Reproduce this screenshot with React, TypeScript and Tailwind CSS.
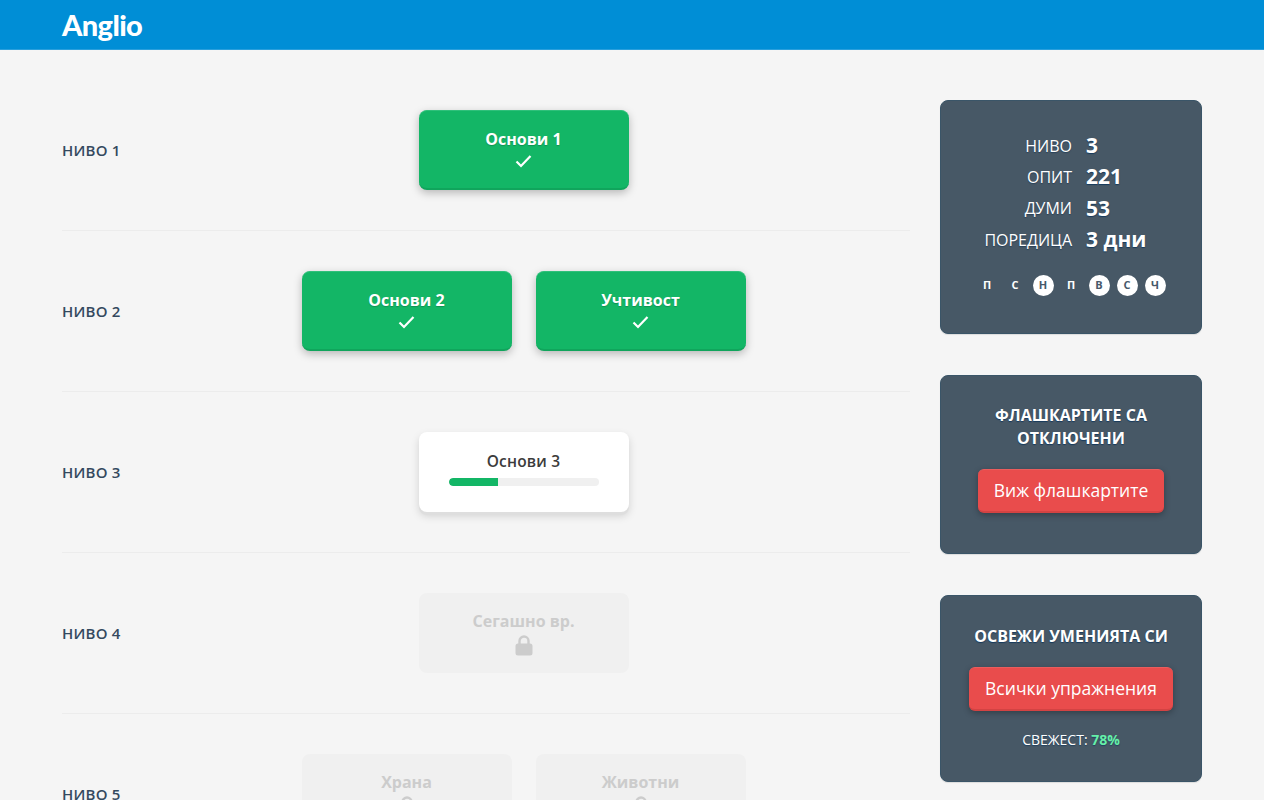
import React from "react";

function Check() {
  return (
    <svg width="17" height="14" viewBox="0 0 17 14" className="mt-[3px]" fill="none">
      <path d="M1.5 7.5 L6 12 L15.5 2" stroke="#fff" strokeWidth="2.2" />
    </svg>
  );
}

function Lock() {
  return (
    <svg width="18" height="21" viewBox="0 0 18 21" className="mt-[2px]">
      <path d="M4.5 9V6a4.5 4.5 0 0 1 9 0v3" fill="none" stroke="#cccccc" strokeWidth="2.4" />
      <rect x="0.5" y="8.5" width="17" height="12" rx="2.5" fill="#cccccc" />
    </svg>
  );
}

function Done({ title }: { title: string }) {
  return (
    <div className="w-[210px] h-[80px] rounded-lg bg-[#13b666] border-b-2 border-b-[#10a55c] border-t border-t-[#2fc07a] shadow-[0_3px_8px_rgba(0,0,0,0.25)] flex flex-col items-center pt-[16px]">
      <div className="text-white font-bold text-[16px] leading-[24px] [text-shadow:0_1px_1px_rgba(0,0,0,0.2)]">{title}</div>
      <Check />
    </div>
  );
}

function Locked({ title }: { title: string }) {
  return (
    <div className="w-[210px] h-[80px] rounded-lg bg-[#f0f0f0] flex flex-col items-center pt-[16px]">
      <div className="text-[#cccccc] font-bold text-[16px] leading-[24px]">{title}</div>
      <Lock />
    </div>
  );
}

function Current({ title }: { title: string }) {
  return (
    <div className="w-[210px] h-[80px] rounded-lg bg-white shadow-[0_3px_0_#dedede,0_4px_8px_rgba(0,0,0,0.15)] flex flex-col items-center pt-[17px]">
      <div className="text-[#3c3c3c] font-semibold text-[15.5px] leading-[24px] tracking-[0.2px]">{title}</div>
      <div className="w-[150px] h-[8px] rounded-full bg-[#f0f0f0] mt-[5px] overflow-hidden">
        <div className="w-[49px] h-full rounded-l-full bg-[#13b666]" />
      </div>
    </div>
  );
}

function Row({ level, children, last }: { level: number; children: React.ReactNode; last?: boolean }) {
  return (
    <div className={`flex items-center py-[40px] ${last ? "" : "border-b border-b-[#ececec]"}`}>
      <div className="w-[75px] text-[#34495e] font-semibold text-[15px] tracking-[0.2px]">НИВО {level}</div>
      <div className="flex-1 flex justify-center gap-[24px]">{children}</div>
    </div>
  );
}

function Stat({ label, value }: { label: string; value: string }) {
  return (
    <div className="flex items-center h-[31.3px]">
      <div className="w-[131px] text-right text-[16px] text-white [text-shadow:0_1px_1px_rgba(20,50,80,0.6)]">{label}</div>
      <div className="pl-[14px] text-[21px] font-bold text-white [text-shadow:0_1px_1px_rgba(10,50,90,0.8)]">{value}</div>
    </div>
  );
}

function Day({ d, on }: { d: string; on?: boolean }) {
  return (
    <div className={`w-[21px] h-[21px] rounded-full flex items-center justify-center text-[11px] font-bold ${on ? "bg-white text-[#47596a]" : "text-white"}`}>{d}</div>
  );
}

function Card({ className, children }: { className: string; children: React.ReactNode }) {
  return (
    <div className={`w-[262px] rounded-lg bg-[#475866] border border-[#3a5568] shadow-[0_1px_1px_rgba(0,0,0,0.1)] ${className}`}>{children}</div>
  );
}

function RedButton({ children }: { children: React.ReactNode }) {
  return (
    <div className="h-[44px] px-[16px] rounded-md bg-[#e94c4c] border-b-2 border-b-[#d34343] border-t border-t-[#ea5d5d] shadow-[0_2px_6px_rgba(0,0,0,0.3)] flex items-center justify-center text-white text-[17.5px]">{children}</div>
  );
}

export default function App() {
  return (
    <div className="h-[800px] overflow-hidden bg-[#f5f5f5] font-['Open_Sans',sans-serif]">
      <header className="h-[50px] bg-[#008ed6] border-b border-b-[#2a9fdc] pl-[62px] flex items-center">
        <span className="text-white font-black text-[29px] tracking-[-0.6px] font-['Lato',sans-serif]">Anglio</span>
      </header>
      <div className="flex pl-[62px] pt-[20px]">
        <div className="w-[848px] shrink-0">
          <Row level={1}><Done title="Основи 1" /></Row>
          <Row level={2}><Done title="Основи 2" /><Done title="Учтивост" /></Row>
          <Row level={3}><Current title="Основи 3" /></Row>
          <Row level={4}><Locked title="Сегашно вр." /></Row>
          <Row level={5} last><Locked title="Храна" /><Locked title="Животни" /></Row>
        </div>
        <div className="ml-[30px] pt-[30px] flex flex-col gap-[41px]">
          <Card className="h-[234px] pt-[29px]">
            <Stat label="НИВО" value="3" />
            <Stat label="ОПИТ" value="221" />
            <Stat label="ДУМИ" value="53" />
            <Stat label="ПОРЕДИЦА" value="3 дни" />
            <div className="flex justify-center gap-[7px] mt-[20px]">
              <Day d="П" /><Day d="С" /><Day d="Н" on /><Day d="П" /><Day d="В" on /><Day d="С" on /><Day d="Ч" on />
            </div>
          </Card>
          <Card className="h-[179px] pt-[28px] flex flex-col items-center">
            <div className="text-white font-bold text-[16px] leading-[23px] text-center w-[200px] [text-shadow:0_1px_1px_rgba(10,50,90,0.8)]">ФЛАШКАРТИТЕ СА ОТКЛЮЧЕНИ</div>
            <div className="mt-[19px]"><RedButton>Виж флашкартите</RedButton></div>
          </Card>
          <Card className="h-[187px] pt-[29px] flex flex-col items-center">
            <div className="text-white font-bold text-[16px] leading-[23px] [text-shadow:0_1px_1px_rgba(10,50,90,0.8)]">ОСВЕЖИ УМЕНИЯТА СИ</div>
            <div className="mt-[19px]"><RedButton>Всички упражнения</RedButton></div>
            <div className="mt-[18px] text-white text-[14px] [text-shadow:0_1px_1px_rgba(10,50,90,0.6)]">СВЕЖЕСТ: <span className="font-bold text-[#66f0a8]">78%</span></div>
          </Card>
        </div>
      </div>
    </div>
  );
}
